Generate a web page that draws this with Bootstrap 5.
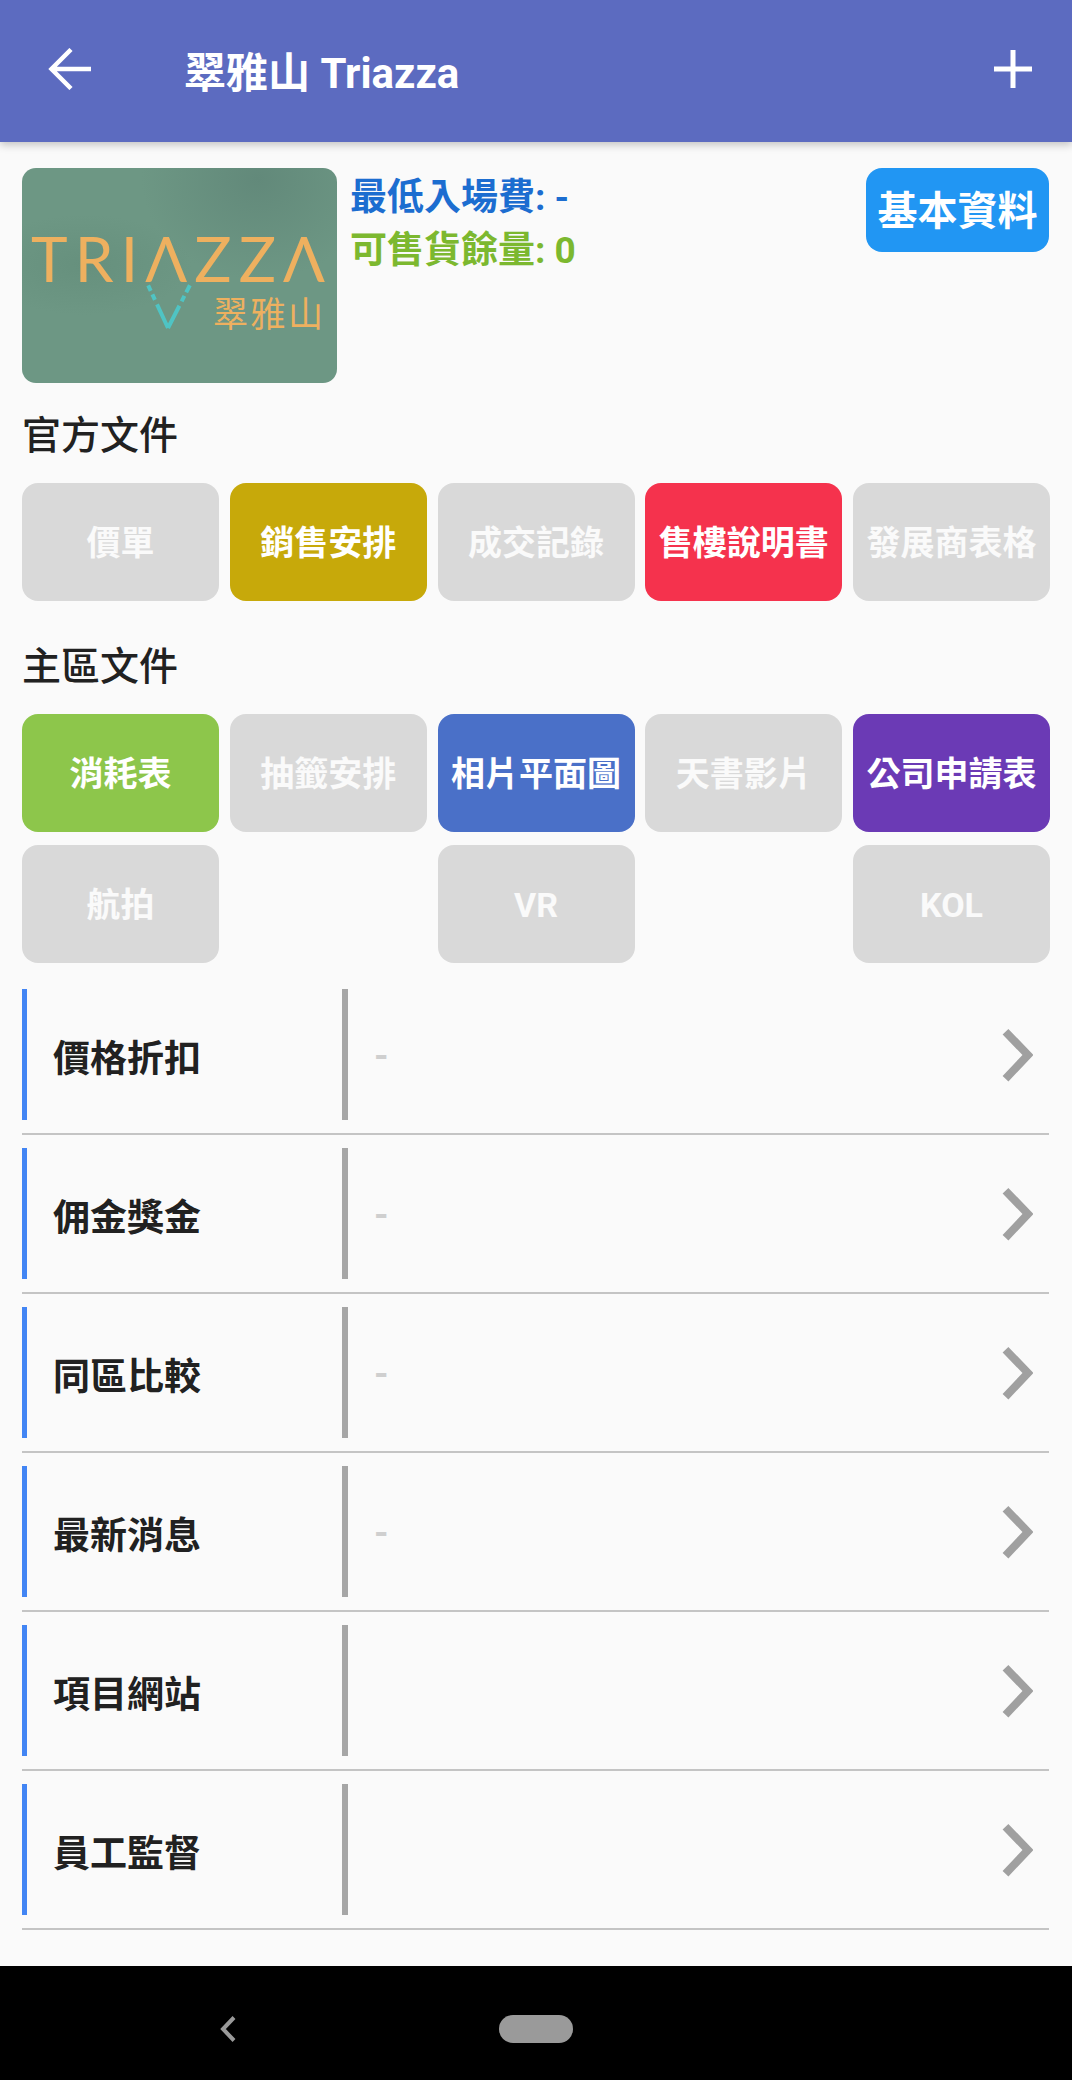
<!DOCTYPE html>
<html lang="zh-Hant">
<head>
    <meta charset="UTF-8">
    <title>翠雅山 Triazza</title>
    <link href="https://cdn.jsdelivr.net/npm/bootstrap@5.3.0/dist/css/bootstrap.min.css" rel="stylesheet">
    <style>
        body {
            background: #fafafa;
            color: #212121;
            font-family: Roboto, "Noto Sans CJK TC", sans-serif;
            height: 2080px;
            overflow: hidden;
        }

        .app-bar {
            height: 142px;
            background: #5c6bc0;
            box-shadow: 0 3px 8px rgba(0, 0, 0, 0.22);
            padding: 0 40px 0 48px;
            position: relative;
        }
        .bar-icon { margin-bottom: 5px; }
        .app-title { font-size: 42px; font-weight: 700; margin-left: 92px; line-height: 1; padding-top: 5px; }

        .page-body { padding: 26px 23px 0 22px; }

        .logo-box {
            width: 315px;
            height: 215px;
            border-radius: 14px;
            background:
                radial-gradient(ellipse at 75% 5%, #62897a 0, transparent 35%),
                radial-gradient(ellipse at 20% 45%, #66907d 0, transparent 30%),
                #6d9784;
        }
        .info-text { font-size: 37px; font-weight: 700; line-height: 53px; margin: 3px 0 0 13px; }
        .info-fee { color: #1c6dd0; }
        .info-stock { color: #7cb82f; }
        .basic-btn {
            width: 183px;
            height: 84px;
            background: #2196f3;
            border-radius: 16px;
            font-size: 40px;
            font-weight: 700;
            padding: 3px 0 0;
        }
        .basic-btn:hover { background: #2196f3; color: #fff; }

        .logo-row { margin-bottom: 23px; }
        .sect-title { font-size: 39px; font-weight: 500; line-height: 56px; margin: 0 0 19px; padding-top: 2px; }
        .doc-grid { display: grid; grid-template-columns: repeat(5, 197px); column-gap: 10.75px; row-gap: 13px; }
        .doc-grid + .sect-title { margin-top: 36px; }
        .doc-grid-last { margin-bottom: 26px; }
        .doc-btn {
            height: 118px;
            border: 0;
            border-radius: 16px;
            background: #d9d9d9;
            color: #fafafa;
            font-size: 34px;
            font-weight: 700;
            padding: 2px 0 0;
            white-space: nowrap;
        }
        .doc-gold { background: #c7a90a; color: #fff; }
        .doc-red { background: #f5324d; color: #fff; }
        .doc-green { background: #8dc64b; color: #fff; }
        .doc-blue { background: #4a70c8; color: #fff; }
        .doc-purple { background: #6b3ab5; color: #fff; }

        .info-row { padding-bottom: 13px; margin-bottom: 13px; border-bottom: 2px solid #c4c4c4; }
        .row-label {
            width: 320px;
            height: 131px;
            border-left: 5px solid #4285f4;
            padding: 10px 0 0 26px;
            font-size: 37px;
            font-weight: 700;
            flex: none;
        }
        .row-value {
            height: 131px;
            border-left: 6px solid #a6a6a6;
            padding: 0 16px 0 26px;
            font-size: 37px;
            font-weight: 700;
            color: #cfcfcf;
        }
        .value-text { padding-top: 3px; }

        .sys-nav { height: 114px; background: #000; position: relative; padding: 12px 0 0 220px; }
        .home-pill { width: 74px; height: 28px; border-radius: 14px; background: #9a9a9a; margin-left: 263px; }
    </style>
</head>
<body class="d-flex flex-column">
    <header class="app-bar d-flex align-items-center text-white">
        <svg class="bar-icon" width="44" height="42" viewBox="0 0 44 42"><path d="M43 21H4M23 1.500 3.500 21 23 40.500" fill="none" stroke="#fff" stroke-width="4.500"/></svg>
        <div class="app-title flex-grow-1">翠雅山 Triazza</div>
        <svg class="bar-icon" width="38" height="38" viewBox="0 0 38 38"><path d="M19 0V38M0 19H38" fill="none" stroke="#fff" stroke-width="5"/></svg>
    </header>

    <main class="page-body flex-grow-1">
        <div class="logo-row d-flex align-items-start">
            <svg class="logo-box flex-none" viewBox="0 0 315 215">
                <text x="9" y="114" font-family="Lato, Roboto, sans-serif" font-weight="400" font-size="62" fill="#eeb05f" textLength="294" lengthAdjust="spacing">TRIΛZZΛ</text>
                <path d="M146 160 168 117" stroke="#4fc4c4" stroke-width="4" stroke-dasharray="25 5 6 4 8" fill="none"/>
                <path d="M146 160 126 117" stroke="#4fc4c4" stroke-width="4" stroke-dasharray="26 5 6 4 6" fill="none"/>
                <text x="191" y="159" font-family="'Noto Sans CJK TC', sans-serif" font-weight="400" font-size="35" fill="#eeb05f" textLength="110" lengthAdjust="spacing">翠雅山</text>
            </svg>
            <div class="info-text flex-grow-1">
                <div class="info-fee">最低入場費: -</div>
                <div class="info-stock">可售貨餘量: 0</div>
            </div>
            <button class="btn basic-btn border-0 text-white">基本資料</button>
        </div>

        <h2 class="sect-title">官方文件</h2>
        <div class="doc-grid">
            <button class="doc-btn">價單</button>
            <button class="doc-btn doc-gold">銷售安排</button>
            <button class="doc-btn">成交記錄</button>
            <button class="doc-btn doc-red">售樓說明書</button>
            <button class="doc-btn">發展商表格</button>
        </div>

        <h2 class="sect-title">主區文件</h2>
        <div class="doc-grid doc-grid-last">
            <button class="doc-btn doc-green">消耗表</button>
            <button class="doc-btn">抽籤安排</button>
            <button class="doc-btn doc-blue">相片平面圖</button>
            <button class="doc-btn">天書影片</button>
            <button class="doc-btn doc-purple">公司申請表</button>
            <button class="doc-btn">航拍</button>
            <div></div>
            <button class="doc-btn">VR</button>
            <div></div>
            <button class="doc-btn">KOL</button>
        </div>

        <div id="info-list"></div>
    </main>

    <nav class="sys-nav d-flex align-items-center">
        <svg width="16" height="28" viewBox="0 0 16 28"><path d="M14 2.500 3 14 14 25.500" fill="none" stroke="#9a9a9a" stroke-width="4"/></svg>
        <div class="home-pill"></div>
    </nav>

    <script src="https://cdn.jsdelivr.net/npm/bootstrap@5.3.0/dist/js/bootstrap.bundle.min.js"></script>
    <script>
        const rows = [
            ['價格折扣', '-'],
            ['佣金獎金', '-'],
            ['同區比較', '-'],
            ['最新消息', '-'],
            ['項目網站', ''],
            ['員工監督', '']
        ];

        document.getElementById('info-list').innerHTML = rows.map(([label, value]) => `
            <div class="info-row d-flex">
                <div class="row-label d-flex align-items-center">${label}</div>
                <div class="row-value d-flex align-items-center justify-content-between flex-grow-1">
                    <span class="value-text">${value}</span>
                    <svg width="33" height="54" viewBox="0 0 33 54"><path d="M5.500 3.700 28 27 5.500 50.700" fill="none" stroke="#a0a0a0" stroke-width="8"/></svg>
                </div>
            </div>
        `).join('');
    </script>
</body>
</html>
